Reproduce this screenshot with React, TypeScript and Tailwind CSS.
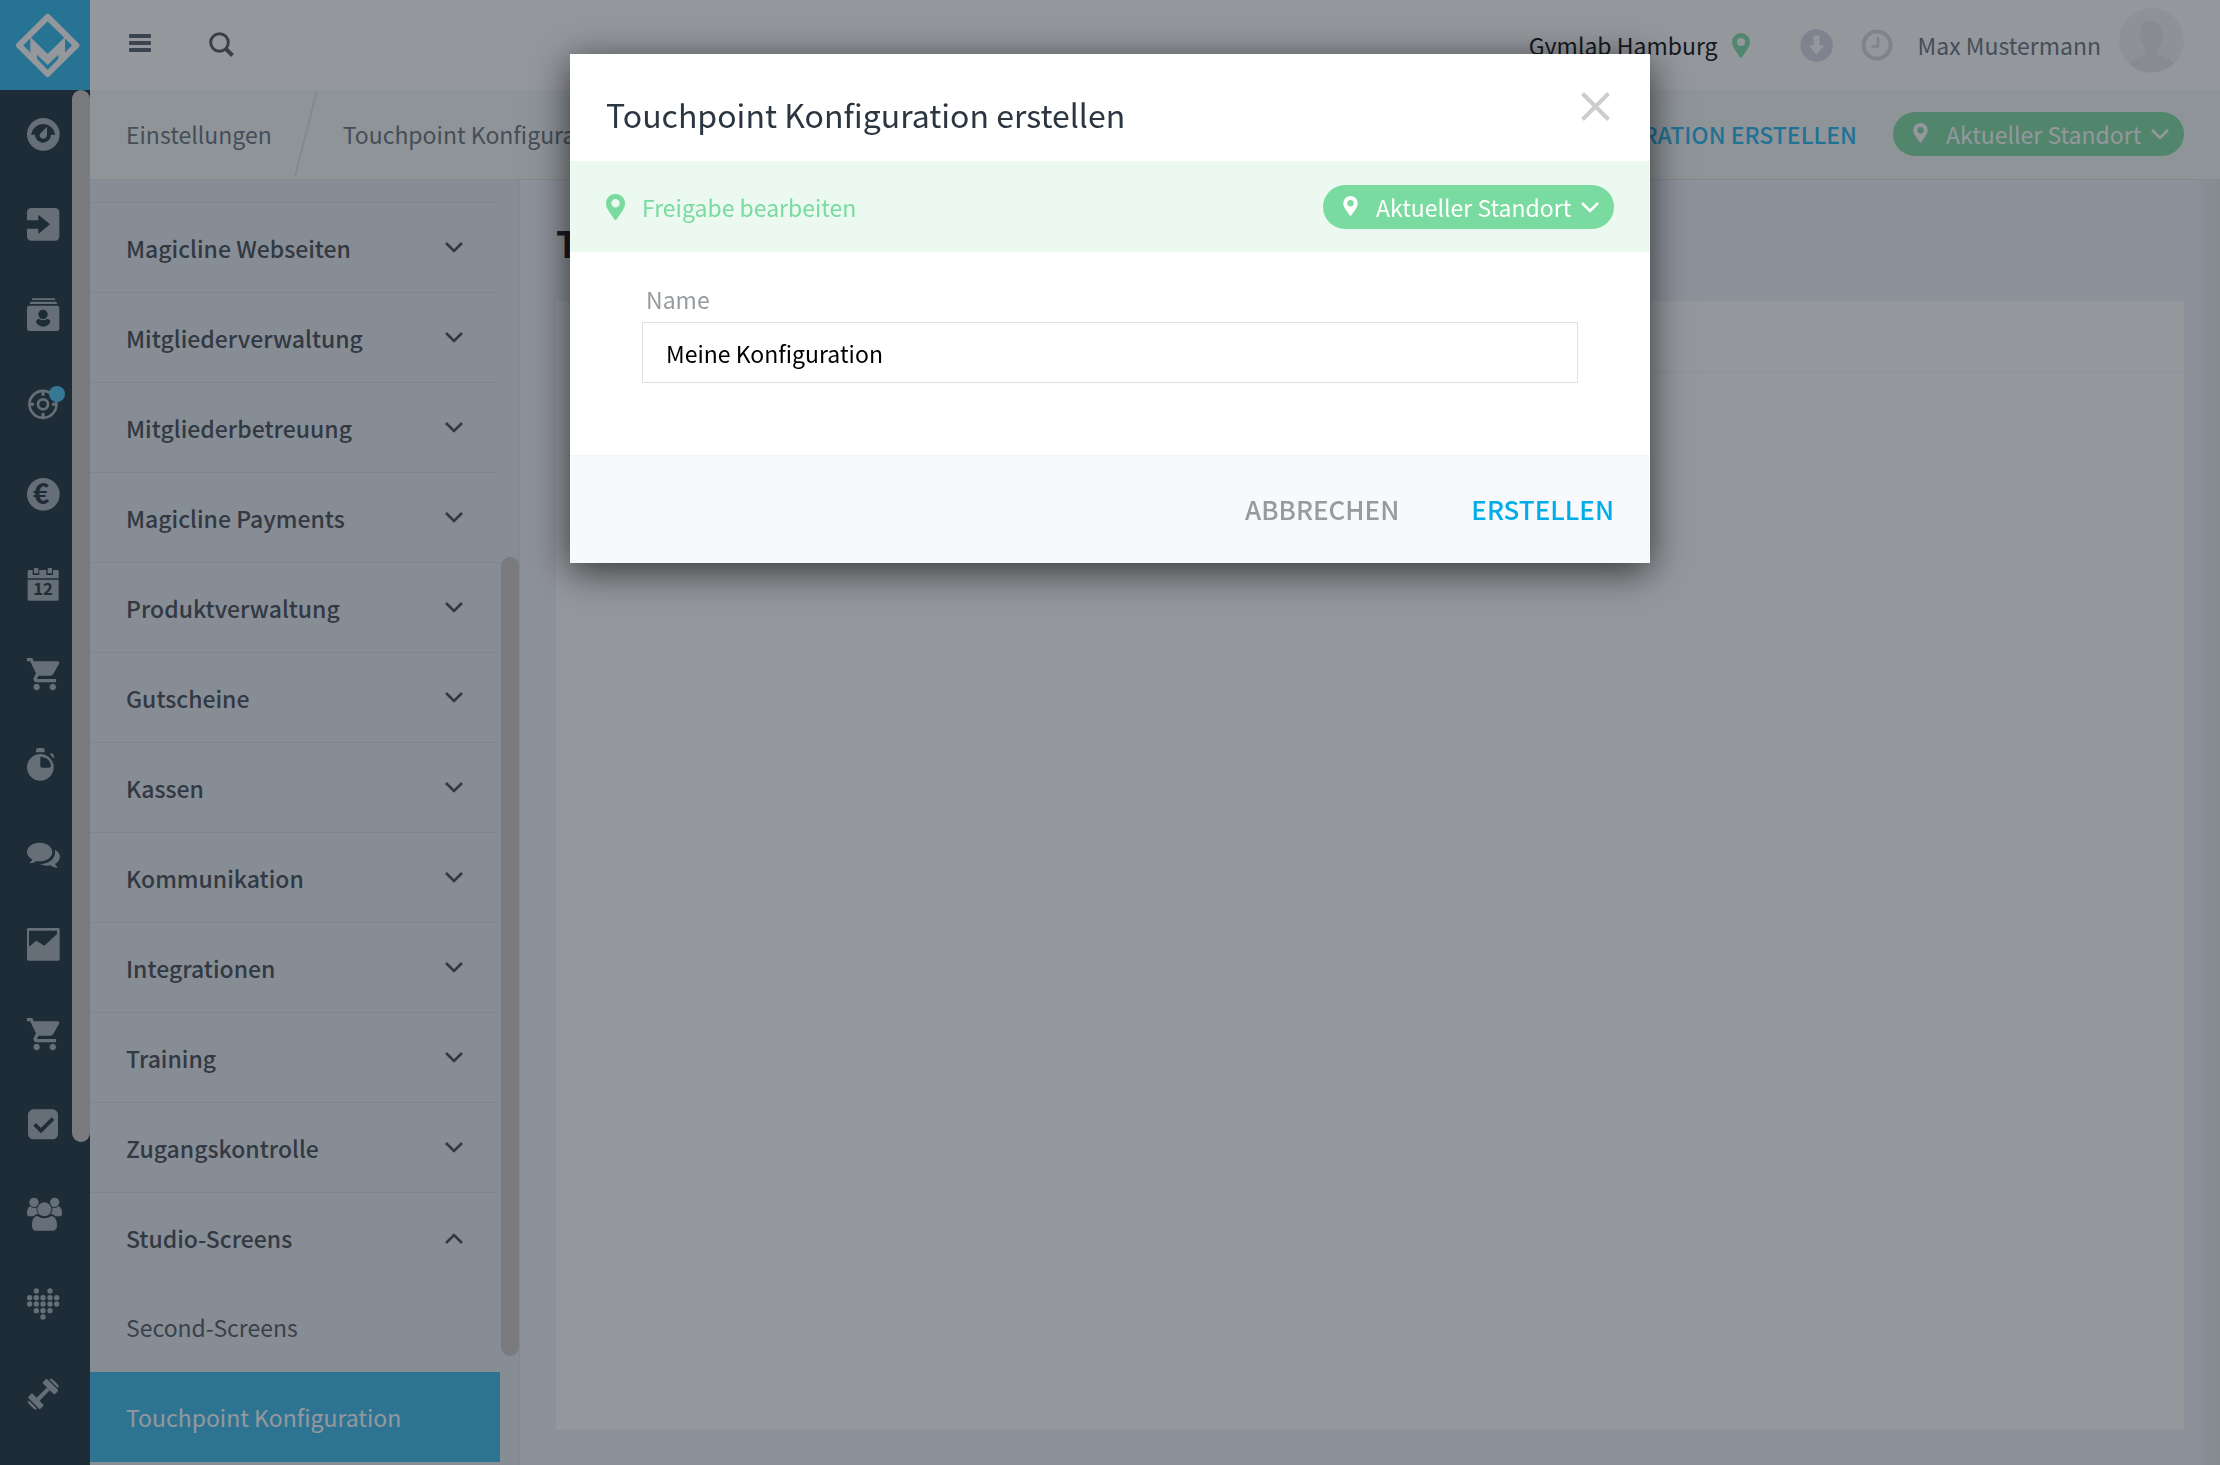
import type { ReactNode } from "react";

const FONT = "font-['Noto_Sans_CJK_SC','Noto_Sans',sans-serif]";

function Pin({ className }: { className: string }) {
  return (
    <svg viewBox="0 0 18 25" className={className} fill="currentColor" aria-hidden="true">
      <path
        fillRule="evenodd"
        d="M9 0a9 9 0 0 0-9 9c0 2.600.9 4.500 2.200 6.800L8.200 24.500q.8.900 1.600 0l6-8.700C17.100 13.500 18 11.600 18 9a9 9 0 0 0-9-9Zm0 5a4 4 0 1 1 0 8 4 4 0 0 1 0-8Z"
      />
    </svg>
  );
}

function Chevron({ className, up = false }: { className: string; up?: boolean }) {
  return (
    <svg viewBox="0 0 18 11" className={className} fill="none" stroke="currentColor" strokeWidth="2.600" aria-hidden="true">
      <path d={up ? "M1 10 9 2l8 8" : "M1 1l8 8 8-8"} />
    </svg>
  );
}

function Glyph({ children }: { children: ReactNode }) {
  return (
    <svg viewBox="0 0 99 99" className="size-[33px] overflow-visible" fill="currentColor" aria-hidden="true">
      {children}
    </svg>
  );
}

const DARK = "#132835";

function CartGlyph() {
  return (
    <Glyph>
      <path
        transform="translate(-5 -9.700) scale(4.850)"
        d="M7 18c-1.100 0-1.990.9-1.990 2S5.900 22 7 22s2-.9 2-2-.9-2-2-2zM1 2v2h2l3.600 7.590-1.350 2.450c-.16.280-.25.610-.25.960 0 1.100.9 2 2 2h12v-2H7.420c-.140 0-.25-.110-.25-.25l.030-.120.900-1.630h7.450c.75 0 1.410-.410 1.750-1.030l3.580-6.490A1.003 1.003 0 0 0 20 4H5.210l-.940-2H1zm16 16c-1.100 0-1.990.9-1.990 2s.890 2 1.990 2 2-.9 2-2-.9-2-2-2z"
      />
    </Glyph>
  );
}

const HEART_DOTS = [
  [28, 9], [69, 9],
  [8, 29], [28, 29], [48, 29], [69, 29], [89, 29],
  [8, 48], [28, 48], [48, 48], [69, 48], [89, 48],
  [28, 68], [48, 68], [69, 68],
  [48, 87],
];

const NAV: { label: string; icon: ReactNode }[] = [
  {
    label: "Dashboard",
    icon: (
      <Glyph>
        <circle cx="49" cy="49" r="49" />
        <path fill={DARK} d="M12 50a37 38 0 0 1 73 0H72a24 24 0 0 1-48 0Z" />
        <path d="M60 26 60 52a11 11 0 1 1-21-5Z" />
      </Glyph>
    ),
  },
  {
    label: "Check-in",
    icon: (
      <Glyph>
        <rect width="97" height="98" rx="13" />
        <path fill={DARK} d="M0 37h34V20l35 29-35 29V62H0Z" />
      </Glyph>
    ),
  },
  {
    label: "Mitglieder",
    icon: (
      <Glyph>
        <path d="M16 1h67l2 5H14ZM11 11h77l3 7H8Z" />
        <rect y="23" width="97" height="76" rx="7" />
        <circle cx="48" cy="49" r="14" fill={DARK} />
        <path fill={DARK} d="M36 63q12 7 25 0c5 1 9 4 9 9-4 9-12 14-21 14s-18-5-22-14c0-5 4-8 9-9Z" />
      </Glyph>
    ),
  },
  {
    label: "Leads",
    icon: (
      <span className="relative block">
        <Glyph>
          <g fill="none" stroke="currentColor">
            <circle cx="48" cy="49" r="40.500" strokeWidth="8" />
            <circle cx="48" cy="49" r="15" strokeWidth="8" />
            <path strokeWidth="9" d="M48 10v13M48 75v13M8 49h13M75 49h13" />
          </g>
        </Glyph>
        <span className="absolute -top-[2px] left-[22px] size-4 rounded-full bg-[#40c1f0]" />
      </span>
    ),
  },
  {
    label: "Finanzen",
    icon: (
      <Glyph>
        <circle cx="49" cy="49" r="49" />
        <text x="42" y="79" textAnchor="middle" fontSize="84" fontWeight="700" fill={DARK} fontFamily="Noto Sans CJK SC">
          €
        </text>
      </Glyph>
    ),
  },
  {
    label: "Kalender",
    icon: (
      <Glyph>
        <path d="M5 6h12v15h20V6h21v15h20V6h14l3 3v22H2V9Z" />
        <rect x="21" width="13" height="16" rx="2" />
        <rect x="62" width="13" height="16" rx="2" />
        <path d="M2 35h93v60l-3 3H5l-3-3Z" />
        <text x="48" y="82" textAnchor="middle" fontSize="50" fontWeight="700" fill={DARK} fontFamily="Noto Sans CJK SC">
          12
        </text>
      </Glyph>
    ),
  },
  { label: "Verkauf", icon: <CartGlyph /> },
  {
    label: "Zeiterfassung",
    icon: (
      <Glyph>
        <circle cx="40" cy="58" r="40" />
        <path d="M27 13V7q0-6 6-7h14q6 1 6 7v6ZM69 19l4-4q9 4 8 14l-3 1Z" />
        <path fill={DARK} d="M43 26q28 4 29 29-1 4-6 4H46q-6 0-6-6V29q0-3 3-3Z" />
      </Glyph>
    ),
  },
  {
    label: "Kommunikation",
    icon: (
      <Glyph>
        <path d="M38 14c21 0 38 12 38 28S59 70 38 70q-5 0-9-1-9 7-20 7-2-1 0-3 7-5 7-9C6 59 0 51 0 42c0-16 17-28 38-28Z" />
        <path d="M84 35c20 10 19 33 0 43q0 4 7 8 1 3-1 3-12 0-20-7-18 3-31-4 42-3 45-34Z" />
      </Glyph>
    ),
  },
  {
    label: "Auswertungen",
    icon: (
      <Glyph>
        <rect width="98" height="98" rx="4" />
        <path fill={DARK} d="M6 8h84v10L52 53 28 38 6 56Z" />
      </Glyph>
    ),
  },
  { label: "Shop", icon: <CartGlyph /> },
  {
    label: "Aufgaben",
    icon: (
      <Glyph>
        <rect x="3" y="4" width="90" height="90" rx="16" />
        <path d="m23 49 19 19 36-36" fill="none" stroke={DARK} strokeWidth="11" />
      </Glyph>
    ),
  },
  {
    label: "Kurse",
    icon: (
      <Glyph>
        <circle cx="21" cy="13" r="14" />
        <circle cx="83" cy="13" r="14" />
        <path d="M9 25q10 8 20 3-2 14 6 20-10 0-15 7H9q-9 0-9-8 0-18 9-22ZM96 25q-10 8-20 3 2 14-6 20 10 0 15 7h11q9 0 9-8 0-18-9-22Z" />
        <circle cx="52" cy="34" r="21" />
        <path d="M31 54q21 14 42 0c12 1 17 14 17 29 0 10-6 15-14 15H29c-9 0-14-5-14-15 0-15 4-28 16-29Z" />
      </Glyph>
    ),
  },
  {
    label: "Gesundheit",
    icon: (
      <Glyph>
        {HEART_DOTS.map(([x, y]) => (
          <circle key={`${x}-${y}`} cx={x} cy={y} r="8" />
        ))}
      </Glyph>
    ),
  },
  {
    label: "Training",
    icon: (
      <Glyph>
        <g transform="rotate(-45 48 49)">
          <rect x="26" y="43" width="45" height="12" />
          <rect x="9" y="23" width="18" height="51" rx="3" />
          <rect x="71" y="23" width="18" height="51" rx="3" />
          <path d="M-1 32h6v34h-6q-3-17 0-34ZM93 32h6q3 17 0 34h-6Z" />
        </g>
      </Glyph>
    ),
  },
];

const SECTIONS = [
  "Magicline Webseiten",
  "Mitgliederverwaltung",
  "Mitgliederbetreuung",
  "Magicline Payments",
  "Produktverwaltung",
  "Gutscheine",
  "Kassen",
  "Kommunikation",
  "Integrationen",
  "Training",
  "Zugangskontrolle",
];

function LocationSelect() {
  return (
    <span className="relative block text-white">
      <Pin className="pointer-events-none absolute top-[11px] left-5 h-5 w-[15px]" />
      <select
        aria-label="Standort"
        className="block h-11 appearance-none rounded-full bg-[#79db9f] pr-[42px] pl-[53px] text-[23px] leading-8 outline-none"
      >
        <option>Aktueller Standort</option>
      </select>
      <Chevron className="pointer-events-none absolute top-[17px] right-[15px] h-[11px] w-[18px]" />
    </span>
  );
}

function IconRail() {
  return (
    <aside className="flex w-[90px] shrink-0 flex-col overflow-hidden bg-[#132835]">
      <a href="#start" aria-label="Magicline" className="block h-[90px] shrink-0 bg-[#25b7ef] text-white">
        <svg viewBox="0 0 270 270" className="size-[90px]" aria-hidden="true">
          <path
            d="m143 51 86 85-86 86-86-86Z"
            fill="none"
            stroke="currentColor"
            strokeWidth="18"
            strokeLinejoin="round"
          />
          <path
            fill="currentColor"
            d="m91 111 52 51 52-51v50l-20 20v-17l-32 31-32-31v17l-20-20Z"
          />
          <path fill="currentColor" d="m102 170 9 6 32 36 32-36 9-6-41 53Z" />
        </svg>
      </a>
      <div className="flex min-h-0 flex-1 justify-between">
        <nav aria-label="Hauptnavigation" className="pl-[27px]">
          {NAV.map((item) => (
            <a key={item.label} href="#nav" aria-label={item.label} className="block h-[90px] pt-7 text-[#a3acb5]">
              {item.icon}
            </a>
          ))}
        </nav>
        <div className="h-[1052px] w-[18px] shrink-0 rounded-full bg-[#c9c6c5]" />
      </div>
    </aside>
  );
}

function TopBar() {
  return (
    <header className="flex h-[90px] shrink-0 items-center bg-white pr-9 pl-[39px] text-[23px] leading-8">
      <button type="button" aria-label="Menü" className="pb-1 text-[#4d5863]">
        <svg viewBox="0 0 22 18" className="h-[18px] w-[22px]" fill="currentColor" aria-hidden="true">
          <rect width="22" height="4" rx="1" />
          <rect y="7" width="22" height="4" rx="1" />
          <rect y="14" width="22" height="4" rx="1" />
        </svg>
      </button>
      <button type="button" aria-label="Suche" className="ml-[58px] pb-0.5 text-[#4b4f55]">
        <svg viewBox="0 0 25 25" className="size-[25px]" fill="none" stroke="currentColor" aria-hidden="true">
          <circle cx="10.500" cy="10.500" r="8.800" strokeWidth="3" />
          <path d="m16.500 16.500 7 7" strokeWidth="4" />
        </svg>
      </button>
      <span className="ml-auto text-black">Gymlab Hamburg</span>
      <Pin className="ml-3.5 h-[25px] w-[18px] text-[#79dea5]" />
      <button type="button" aria-label="Downloads" className="ml-[50px] text-[#d5d7e0]">
        <svg viewBox="0 0 33 33" className="size-[33px]" aria-hidden="true">
          <circle cx="16.500" cy="16.500" r="16.300" fill="currentColor" />
          <path d="M13.500 6.500h6v10H24l-7.500 9.500L9 16.500h4.500Z" fill="#fff" />
        </svg>
      </button>
      <button type="button" aria-label="Verlauf" className="ml-7 text-[#d6d8db]">
        <svg viewBox="0 0 32 32" className="size-8" fill="none" stroke="currentColor" aria-hidden="true">
          <circle cx="16" cy="16" r="13.500" strokeWidth="4" />
          <path d="M17 8v9.500h-6.500" strokeWidth="2.600" />
        </svg>
      </button>
      <span className="ml-[25px] text-[#5f6c77]">Max Mustermann</span>
      <svg viewBox="0 0 195 195" className="mt-2 ml-[18px] size-[65px] self-start" aria-hidden="true">
        <circle cx="97.500" cy="97.500" r="97.500" fill="#f3f4f6" />
        <path
          fill="#e6e8eb"
          d="M98 39c23 0 33 15 33 35 4 1 3 20-2 23-3 14-9 21-14 27v12c9 9 38 12 50 30a97 97 0 0 1-135 0c14-18 42-21 51-30v-12c-6-6-11-13-14-27-5-3-7-22-3-23 0-20 11-35 34-35Z"
        />
      </svg>
    </header>
  );
}

function CrumbBar() {
  return (
    <div className="flex h-[90px] shrink-0 items-center border-b border-[#dce3e3] bg-[#f4f8f7] pr-9 pb-0.5 pl-9 text-[23px] leading-8 text-[#5f6c77]">
      <nav aria-label="Brotkrumen" className="flex items-center">
        <a href="#einstellungen">Einstellungen</a>
        <svg viewBox="0 0 24 88" className="mr-[25px] ml-[22px] h-[87px] w-6" fill="none" stroke="#dce2e3" strokeWidth="2" aria-hidden="true">
          <path d="M23 1 1 87" />
        </svg>
        <a href="#touchpoint">Touchpoint Konfiguration</a>
      </nav>
      <button type="button" className="mr-9 ml-auto font-medium text-[#17b4f0]">
        TOUCHPOINT KONFIGURATION ERSTELLEN
      </button>
      <LocationSelect />
    </div>
  );
}

function SettingsMenu() {
  return (
    <aside className="flex w-[430px] shrink-0 overflow-hidden border-r border-[#d9e0e8] bg-[#e3eaf1]">
      <nav aria-label="Einstellungen" className="flex-1 text-[23px] leading-8 text-[#3b424b]">
        <div className="h-[23px] border-b border-[#d3dceb]" />
        {SECTIONS.map((name) => (
          <button
            key={name}
            type="button"
            aria-expanded="false"
            className="flex h-[90px] w-full items-center justify-between border-b border-[#d3dceb] pr-[37px] pl-9 font-medium"
          >
            {name}
            <Chevron className="h-[11px] w-[18px]" />
          </button>
        ))}
        <button
          type="button"
          aria-expanded="true"
          className="flex h-[90px] w-full items-center justify-between pr-[37px] pl-9 font-medium"
        >
          Studio-Screens
          <Chevron up className="h-[11px] w-[18px]" />
        </button>
        <a href="#second-screens" className="flex h-[89px] items-center pb-0.5 pl-9 text-[#4b525b]">
          Second-Screens
        </a>
        <a href="#touchpoint" className="flex h-[90px] items-center bg-[#31b8eb] pl-9 text-white">
          Touchpoint Konfiguration
        </a>
      </nav>
      <div className="mt-[377px] ml-px h-[799px] w-[18px] rounded-full bg-[#c9c6c5]" />
    </aside>
  );
}

function Dialog() {
  return (
    <div className="fixed inset-0 flex items-start justify-center bg-[#293039]/50 pt-[54px]">
      <div
        role="dialog"
        aria-modal="true"
        aria-labelledby="dialog-title"
        className="w-full max-w-[1080px] bg-white shadow-[0_8px_36px_rgba(0,0,0,0.65)]"
      >
        <div className="flex items-start justify-between px-9 pt-9 pb-[23px]">
          <h2 id="dialog-title" className="text-[32px] leading-[48px] text-[#2b3641]">
            Touchpoint Konfiguration erstellen
          </h2>
          <button type="button" aria-label="Schließen" className="mt-0.5 mr-1 text-[#cdcdcd]">
            <svg viewBox="0 0 29 29" className="size-[29px]" fill="none" stroke="currentColor" strokeWidth="4" aria-hidden="true">
              <path d="m1.500 1.500 26 26m0-26-26 26" />
            </svg>
          </button>
        </div>
        <div className="flex h-[91px] items-center bg-[#ebf9f1] px-9 text-[23px] leading-8 text-[#79db9f]">
          <Pin className="h-7 w-[19px]" />
          <span className="mr-auto ml-[17px]">Freigabe bearbeiten</span>
          <LocationSelect />
        </div>
        <div className="px-[72px] pt-[31px] pb-[72px] text-[23px] leading-8">
          <label htmlFor="name" className="mb-[7px] block pl-1 text-[#969b9f]">
            Name
          </label>
          <input
            id="name"
            type="text"
            defaultValue="Meine Konfiguration"
            className="block h-[61px] w-full border border-[#dbe3e2] bg-white px-[23px] text-black outline-none"
          />
        </div>
        <div className="flex h-[108px] items-center justify-end gap-[72px] border-t border-[#f2f4f7] bg-[#f8f9fc] px-9 pb-0.5 text-[26px] leading-9 font-medium">
          <button type="button" className="text-[#969b9f]">
            ABBRECHEN
          </button>
          <button type="button" className="text-[#00ade6]">
            ERSTELLEN
          </button>
        </div>
      </div>
    </div>
  );
}

export default function App() {
  return (
    <div className={`flex h-screen overflow-hidden bg-[#f1f2fb] ${FONT}`}>
      <IconRail />
      <div className="flex min-w-0 flex-1 flex-col">
        <TopBar />
        <CrumbBar />
        <div className="flex min-h-0 flex-1">
          <SettingsMenu />
          <main className="flex min-w-0 flex-1 flex-col bg-linear-to-l from-[#e0e6e5] to-[#f1f2fb] to-[28px] px-9 pb-[35px]">
            <h1 className="pt-9 pb-[33px] text-4xl leading-[52px] font-bold text-[#07080a]">Touchpoint Konfiguration</h1>
            <section className="flex-1 bg-white">
              <div className="h-[72px] border-b border-[#f3f4f6]" />
            </section>
          </main>
        </div>
      </div>
      <Dialog />
    </div>
  );
}
